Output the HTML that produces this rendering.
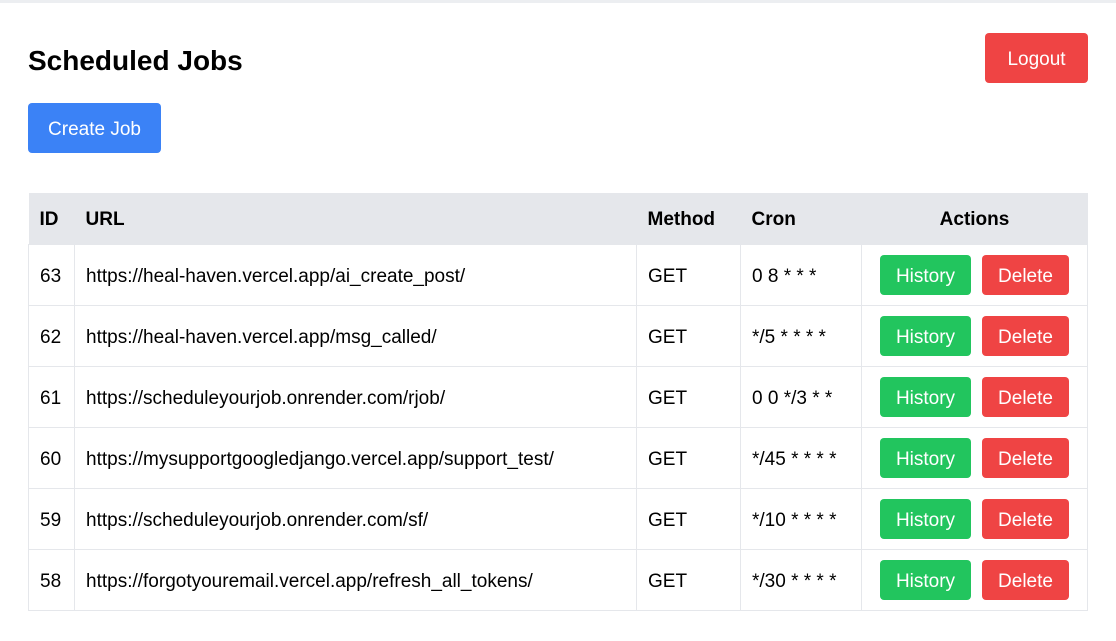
<!DOCTYPE html>
<html><head><style>
*{box-sizing:border-box;margin:0;padding:0}
body{width:1116px;height:641px;background:#fff;font-family:"Liberation Sans",sans-serif;color:#000;position:relative;overflow:hidden;border-top:3px solid #eceef1}
h1{position:absolute;left:28px;top:40px;font-size:28px;font-weight:bold;line-height:36px}
.btn{position:absolute;color:#fff;border-radius:4px;font-size:19px;display:flex;align-items:center;justify-content:center;padding-top:4px}
table{position:absolute;left:28px;top:190px;width:1060px;border-collapse:collapse;font-size:19px}
th{background:#e5e7eb;height:51px;text-align:left;padding-left:11px;font-weight:bold;padding-top:4px}
td{height:61px;border:1px solid #e5e7eb;padding-left:11px;padding-top:4px}
.a{padding-left:18px;padding-top:0}
.b{display:inline-flex;align-items:center;justify-content:center;height:40px;color:#fff;border-radius:4px;vertical-align:middle;padding-top:4px}
.h{background:#22c55e;width:91px;margin-right:11px}
.d{background:#ef4444;width:87px}
</style></head><body>
<h1>Scheduled Jobs</h1>
<div class="btn" style="left:985px;top:30px;width:103px;height:50px;background:#ef4444">Logout</div>
<div class="btn" style="left:28px;top:100px;width:133px;height:50px;background:#3b82f6">Create Job</div>
<table>
<tr><th style="width:46px">ID</th><th style="width:562px">URL</th><th style="width:104px">Method</th><th style="width:121px">Cron</th><th style="text-align:center;padding-left:0">Actions</th></tr>
<tr><td>63</td><td>https://heal-haven.vercel.app/ai_create_post/</td><td>GET</td><td>0 8 * * *</td><td class="a"><span class="b h">History</span><span class="b d">Delete</span></td></tr>
<tr><td>62</td><td>https://heal-haven.vercel.app/msg_called/</td><td>GET</td><td>*/5 * * * *</td><td class="a"><span class="b h">History</span><span class="b d">Delete</span></td></tr>
<tr><td>61</td><td>https://scheduleyourjob.onrender.com/rjob/</td><td>GET</td><td>0 0 */3 * *</td><td class="a"><span class="b h">History</span><span class="b d">Delete</span></td></tr>
<tr><td>60</td><td>https://mysupportgoogledjango.vercel.app/support_test/</td><td>GET</td><td>*/45 * * * *</td><td class="a"><span class="b h">History</span><span class="b d">Delete</span></td></tr>
<tr><td>59</td><td>https://scheduleyourjob.onrender.com/sf/</td><td>GET</td><td>*/10 * * * *</td><td class="a"><span class="b h">History</span><span class="b d">Delete</span></td></tr>
<tr><td>58</td><td>https://forgotyouremail.vercel.app/refresh_all_tokens/</td><td>GET</td><td>*/30 * * * *</td><td class="a"><span class="b h">History</span><span class="b d">Delete</span></td></tr>
</table>
</body></html>
